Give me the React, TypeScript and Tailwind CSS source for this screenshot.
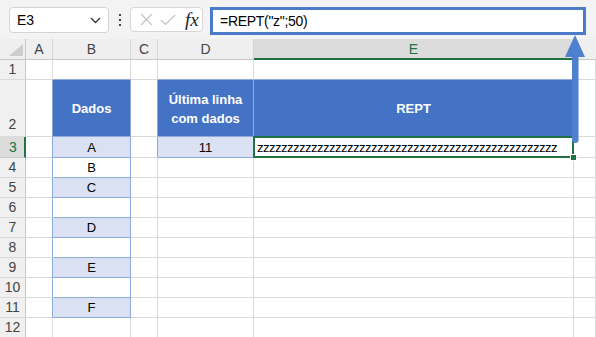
import React from "react";

type Cell = { cls: string; content?: React.ReactNode; over?: React.ReactNode };

function App() {
  const rowHeights = [20, 57, 21, 20, 20, 20, 20, 20, 20, 20, 20, 20];
  const bData: Record<number, string> = { 3: "A", 4: "B", 5: "C", 7: "D", 9: "E", 11: "F" };

  const rows: Cell[][] = [];
  for (let r = 1; r <= 12; r++) {
    const cells: Cell[] = [];
    // row header
    if (r === 3) {
      cells.push({
        cls: "bg-[#dcdcdc] border-r-2 border-r-[#217346] border-b border-b-[#c8c8c8] text-[#217346] flex items-center justify-center text-[14px] pl-[2px]",
        content: String(r),
      });
    } else if (r === 2) {
      cells.push({
        cls: "bg-[#f0f0f0] border-r border-r-[#c8c8c8] border-b border-b-[#dadada] text-[#444444] flex items-end justify-center pb-[1px] text-[14px]",
        content: String(r),
      });
    } else {
      cells.push({
        cls: "bg-[#f0f0f0] border-r border-r-[#c8c8c8] border-b border-b-[#dadada] text-[#444444] flex items-center justify-center text-[14px]",
        content: String(r),
      });
    }
    // A
    cells.push({
      cls:
        r >= 2 && r <= 11
          ? "bg-white border-r border-r-[#8ea9db] border-b border-b-[#dadada]"
          : "bg-white border-r border-r-[#dadada] border-b border-b-[#dadada]",
    });
    // B
    if (r === 1) {
      cells.push({ cls: "bg-white border-r border-r-[#dadada] border-b border-b-[#8ea9db]" });
    } else if (r === 2) {
      cells.push({
        cls: "bg-[#4472c4] border-r border-r-[#8ea9db] border-b border-b-[#8ea9db] text-white font-bold text-[13px] flex items-center justify-center pt-[2px]",
        content: "Dados",
      });
    } else if (r <= 11) {
      const filled = r % 2 === 1;
      cells.push({
        cls: filled
          ? "bg-[#d9e1f2] border-r border-r-[#8ea9db] border-b border-b-[#8ea9db] text-black text-[13px] flex items-center justify-center pt-[1px]"
          : "bg-white border-r border-r-[#8ea9db] border-b border-b-[#8ea9db] text-black text-[13px] flex items-center justify-center pt-[1px]",
        content: bData[r] ?? "",
      });
    } else {
      cells.push({ cls: "bg-white border-r border-r-[#dadada] border-b border-b-[#dadada]" });
    }
    // C
    cells.push({
      cls:
        r === 2 || r === 3
          ? "bg-white border-r border-r-[#8ea9db] border-b border-b-[#dadada]"
          : "bg-white border-r border-r-[#dadada] border-b border-b-[#dadada]",
    });
    // D
    if (r === 1) {
      cells.push({ cls: "bg-white border-r border-r-[#dadada] border-b border-b-[#8ea9db]" });
    } else if (r === 2) {
      cells.push({
        cls: "bg-[#4472c4] border-r border-r-[#8ea9db] border-b border-b-[#8ea9db] text-white font-bold text-[13px] flex flex-col items-center justify-center leading-[19px] pt-[2px]",
        content: (
          <>
            <span>Última linha</span>
            <span>com dados</span>
          </>
        ),
      });
    } else if (r === 3) {
      cells.push({
        cls: "bg-[#d9e1f2] border-r border-r-[#8ea9db] border-b border-b-[#8ea9db] text-black text-[13px] flex items-center justify-center pt-[1px]",
        content: "11",
      });
    } else {
      cells.push({ cls: "bg-white border-r border-r-[#dadada] border-b border-b-[#dadada]" });
    }
    // E
    if (r === 1) {
      cells.push({ cls: "bg-white border-r border-r-[#dadada] border-b border-b-[#8ea9db]" });
    } else if (r === 2) {
      cells.push({
        cls: "bg-[#4472c4] border-r border-r-[#8ea9db] border-b border-b-[#8ea9db] text-white font-bold text-[13px] flex items-center justify-center pt-[2px]",
        content: "REPT",
      });
    } else if (r === 3) {
      cells.push({
        cls: "relative bg-white border-r border-r-[#dadada] border-b border-b-[#dadada] text-black text-[13px] tracking-[-0.5px] flex items-center pl-[3px] pt-[1px] whitespace-nowrap",
        content: "z".repeat(50),
        over: (
          <>
            <div className="absolute top-[-1px] left-[-1px] right-[-1px] bottom-[-1px] border-2 border-[#217346] pointer-events-none" />
            <div className="absolute right-[-4px] bottom-[-4px] w-[7px] h-[7px] bg-[#217346] border border-white z-10" />
          </>
        ),
      });
    } else {
      cells.push({ cls: "bg-white border-r border-r-[#dadada] border-b border-b-[#dadada]" });
    }
    // F
    cells.push({ cls: "bg-white border-r border-r-[#dadada] border-b border-b-[#dadada]" });
    rows.push(cells);
  }

  const colHeaders = ["A", "B", "C", "D", "E"];

  return (
    <div
      className="relative w-[596px] h-[337px] overflow-hidden bg-white"
      style={{ fontFamily: "'Liberation Sans', Arial, sans-serif" }}
    >
      {/* Toolbar / formula bar */}
      <div className="h-[39px] bg-[#f3f3f3] flex items-start pt-[7px] pl-[9px]">
        <div className="w-[100px] h-[26px] bg-white border border-[#d4d4d4] rounded-[4px] flex items-center justify-between pl-[7px] pr-[7px]">
          <span className="text-[14px] text-black">E3</span>
          <svg width="11" height="7" viewBox="0 0 11 7">
            <path d="M1 1 L5.5 5.5 L10 1" fill="none" stroke="#333" strokeWidth="1.3" />
          </svg>
        </div>
        <div className="w-[21px] h-[26px] flex flex-col items-center justify-center gap-[3px]">
          <div className="w-[2px] h-[2px] bg-[#444]" />
          <div className="w-[2px] h-[2px] bg-[#444]" />
          <div className="w-[2px] h-[2px] bg-[#444]" />
        </div>
        <div className="w-[73px] h-[25px] bg-white border border-[#d6d6d6] rounded-[4px] flex items-center pl-[9px] gap-[7px]">
          <svg width="13" height="13" viewBox="0 0 13 13">
            <path d="M1 1 L12 12 M12 1 L1 12" stroke="#c4c4c4" strokeWidth="1.2" fill="none" />
          </svg>
          <svg width="16" height="12" viewBox="0 0 16 12">
            <path d="M1 6 L5.5 10.5 L15 1" stroke="#c4c4c4" strokeWidth="1.2" fill="none" />
          </svg>
          <span
            className="italic text-[19px] text-[#222] leading-none ml-[2px]"
            style={{ fontFamily: "'Liberation Serif', 'DejaVu Serif', serif" }}
          >
            fx
          </span>
        </div>
        <div className="ml-[7px] w-[376px] h-[28px] bg-white border-[3px] border-[#4a7ac8] flex items-center pl-[7px]">
          <span className="text-[14px] tracking-[-0.3px] text-black">=REPT("z";50)</span>
        </div>
      </div>

      {/* Sheet grid */}
      <div
        className="grid grid-cols-[26px_27px_78px_27px_96px_320px_1fr]"
        style={{ gridTemplateRows: `21px ${rowHeights.map((h) => h + "px").join(" ")}` }}
      >
        {/* corner */}
        <div className="bg-[#efefef] border-r border-r-[#c8c8c8] border-b border-b-[#c8c8c8] flex items-end justify-end pr-[2px] pb-[3px]">
          <svg width="14" height="12" viewBox="0 0 14 12">
            <polygon points="14,0 14,12 0,12" fill="#cdcdcd" />
          </svg>
        </div>
        {colHeaders.map((c) =>
          c === "E" ? (
            <div
              key={c}
              className="bg-[#dcdcdc] border-r border-r-[#c8c8c8] border-b-2 border-b-[#217346] text-[#217346] text-[14px] flex items-center justify-center pt-[1px]"
            >
              {c}
            </div>
          ) : (
            <div
              key={c}
              className="bg-[#efefef] border-r border-r-[#d4d4d4] border-b border-b-[#c8c8c8] text-[#444444] text-[14px] flex items-center justify-center pt-[1px]"
            >
              {c}
            </div>
          )
        )}
        <div className="bg-[#efefef] border-b border-b-[#c8c8c8]" />

        {rows.map((cells, ri) =>
          cells.map((cell, ci) => (
            <div key={`${ri}-${ci}`} className={cell.cls}>
              {cell.content}
              {cell.over}
            </div>
          ))
        )}
      </div>

      {/* Arrow overlay */}
      <svg className="absolute left-0 top-0 pointer-events-none" width="596" height="337" viewBox="0 0 596 337">
        <rect x="572" y="54" width="6.5" height="89" rx="3" fill="#4f7fcf" />
        <polygon points="575,35 585,57 565,57" fill="#4f7fcf" />
      </svg>
    </div>
  );
}

export default App;
